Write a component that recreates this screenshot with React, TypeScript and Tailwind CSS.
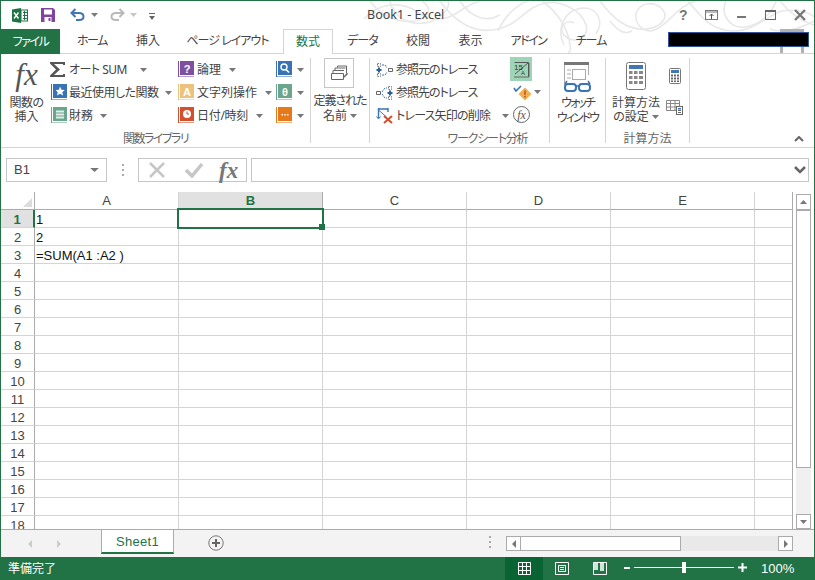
import { FC, ReactNode } from 'react';

const FONT = 'font-["Noto_Sans","Noto_Sans_CJK_JP",sans-serif] [font-feature-settings:"palt"]';
const COLS = ['A', 'B', 'C', 'D', 'E', ''];
const COL_WIDTHS = ['w-[144px]', 'w-[144px]', 'w-[144px]', 'w-[144px]', 'w-[144px]', 'w-[38px]'];
const ROWS = Array.from({ length: 18 }, (_, i) => i + 1);
const CELLS: Record<number, string> = { 1: '1', 2: '2', 3: '=SUM(A1 :A2 )' };
const TABS = [
  { label: 'ホーム', w: 'w-[64px] tracking-[-1.5px]' },
  { label: '挿入', w: 'w-[48px]' },
  { label: 'ページ レイアウト', w: 'w-[111px] tracking-[-1px]' },
  { label: '数式', w: 'w-[50px]', active: true },
  { label: 'データ', w: 'w-[59px] tracking-[-1px]' },
  { label: '校閲', w: 'w-[52px]' },
  { label: '表示', w: 'w-[53px]' },
  { label: 'アドイン', w: 'w-[63px] tracking-[-1.5px]' },
  { label: 'チーム', w: 'w-[62px] tracking-[-1px]' },
];

const Caret: FC<{ color?: string; className?: string }> = ({ color = '#777', className = '' }) => (
  <svg width="7" height="4" viewBox="0 0 7 4" className={className}>
    <path d="M0 0h7L3.5 4z" fill={color} />
  </svg>
);

const BookIcon: FC<{ color: string; glyph: ReactNode }> = ({ color, glyph }) => (
  <svg width="16" height="17" viewBox="0 0 16 17" className="shrink-0">
    <rect x="0" y="0" width="1" height="16" fill={color} />
    <rect x="2" y="0" width="14" height="14" fill={color} />
    <rect x="1" y="15" width="15" height="1" fill={color} opacity="0.55" />
    {glyph}
  </svg>
);

const glyphText = (t: string) => (
  <text x="9" y="11.5" fontSize="11" fontWeight="700" textAnchor="middle" fill="#fff" fontFamily="Liberation Sans">
    {t}
  </text>
);

const Row: FC<{ icon: ReactNode; label?: string; labelClass?: string; caret?: boolean; gap?: string; caretGap?: string }> = ({
  icon,
  label,
  labelClass = '',
  caret = true,
  gap = 'gap-[3px]',
  caretGap = 'ml-[5px]',
}) => (
  <div className={`flex h-[23px] items-center ${gap} whitespace-nowrap`}>
    {icon}
    {label && <span className={labelClass}>{label}</span>}
    {caret && <Caret className={caretGap} />}
  </div>
);

const Separator = () => <div className="my-[4px] w-px shrink-0 bg-[#d4d4d4]" />;

const Swirls = () => (
  <svg width="485" height="53" viewBox="0 0 485 53" fill="none" stroke="#e8e8e8" strokeWidth="1.6" className="pointer-events-none absolute top-0 left-[329px]">
    <path d="M34 18C48 2 70 0 86 10c16 12 30 10 44 0 8-6 14-8 20-10" />
    <path d="M40 0c10 14 26 22 44 20 14-2 20-12 8-20" />
    <path d="M60 0c4 22 34 30 52 14 6-6 8-10 6-14" />
    <path d="M110 0c14 20 34 34 58 28 24-6 26-22 48-26 12-2 34 4 40 22 4 14-14 20-22 10-6-8 2-16 10-12" />
    <path d="M130 0c10 16 26 22 40 14" />
    <path d="M168 30c6-14 18-26 30-30" />
    <path d="M212 0c14 10 26 26 28 44 2 6-2 8-2 8" />
    <path d="M234 44c-8-16 0-36 20-37 14 0 20 14 12 26" />
    <path d="M270 0c12 16 26 30 46 28 18-2 24-14 14-22-8-6-20-4-24 6-2 12 10 24 24 14 12-8 20-22 36-26" />
    <path d="M280 20c8 10 14 14 22 10" />
    <path d="M358 0c12 14 22 30 46 30 20 0 34-16 48-20 12-2 26 0 32 6" />
    <path d="M396 0c-6 14 4 28 20 26 14-2 26-14 30-26" />
    <path d="M450 0c8 10 20 20 34 24" />
    <path d="M440 28c10 4 26 2 44-8" />
  </svg>
);

const TitleBar = () => (
  <div className="relative flex h-[28px] shrink-0 items-center">
    <Swirls />
    <svg width="16" height="15" viewBox="0 0 16 15" className="absolute top-[7px] left-[11px]">
      <path d="M0 1.5 9 0v15L0 13.5z" fill="#217346" />
      <rect x="9" y="2" width="6.5" height="11" fill="#fff" stroke="#217346" />
      <path d="M11 4.5h4M11 7.5h4M11 10.5h4M12.5 3v9" stroke="#217346" />
      <path d="M2 4.5 6.5 10.5M6.5 4.5 2 10.5" stroke="#fff" strokeWidth="1.4" />
    </svg>
    <svg width="14" height="14" viewBox="0 0 14 14" className="absolute top-[7px] left-[40px]">
      <path d="M0 0h12l2 2v12H0z" fill="#80449e" />
      <rect x="3" y="1.5" width="8" height="5" fill="#fff" />
      <rect x="3.5" y="9" width="7" height="5" fill="#fff" />
      <rect x="7.5" y="10" width="2" height="3" fill="#80449e" />
    </svg>
    <svg width="15" height="14" viewBox="0 0 15 14" fill="none" className="absolute top-[7px] left-[69px]">
      <path d="M1.5 5H9c6 0 6 7 0 7H6" stroke="#4276b1" strokeWidth="2" />
      <path d="M5.5 1 1.5 5l4 4" stroke="#4276b1" strokeWidth="2" />
    </svg>
    <Caret color="#7a7a7a" className="absolute top-[12px] left-[90px]" />
    <svg width="15" height="14" viewBox="0 0 15 14" fill="none" className="absolute top-[7px] left-[109px]">
      <path d="M13.5 5H6c-6 0-6 7 0 7h3" stroke="#b9b9b9" strokeWidth="2" />
      <path d="M9.5 1l4 4-4 4" stroke="#b9b9b9" strokeWidth="2" />
    </svg>
    <Caret color="#c6c6c6" className="absolute top-[12px] left-[129px]" />
    <svg width="6" height="7" viewBox="0 0 6 7" className="absolute top-[12px] left-[148px]">
      <path d="M0 0h6v1H0zM0 3h6L3 7z" fill="#666" />
    </svg>
    <div className="absolute top-[5px] left-[366px] text-[12.5px] leading-[18px] text-[#444]">Book1 - Excel</div>
    <div className="absolute top-[4px] left-[678px] font-['Liberation_Sans',sans-serif] text-[14px] leading-[20px] font-bold text-[#777]">?</div>
    <svg width="14" height="11" viewBox="0 0 14 11" fill="none" className="absolute top-[9px] left-[704px]">
      <rect x="0.5" y="0.5" width="12" height="9" stroke="#777" />
      <path d="M1 2h11" stroke="#777" />
      <path d="M6.5 9V4M4.5 6l2-2 2 2" stroke="#555" />
    </svg>
    <div className="absolute top-[15px] left-[736px] h-[2px] w-[9px] bg-[#777]" />
    <div className="absolute top-[9px] left-[764px] h-[10px] w-[11px] border border-t-2 border-[#666]" />
    <svg width="12" height="12" viewBox="0 0 12 12" className="absolute top-[8px] left-[793px]">
      <path d="M1 1l10 10M11 1 1 11" stroke="#777" strokeWidth="2.4" />
    </svg>
  </div>
);

const TabStrip = () => (
  <div className="relative flex h-[25px] shrink-0 items-stretch border-b border-[#d4d4d4] whitespace-nowrap">
    <div className="-mb-px flex w-[59px] items-center justify-center bg-[#217346] tracking-[-1.5px] text-white">ファイル</div>
    {TABS.map((t) =>
      t.active ? (
        <div key={t.label} className={`${t.w} -mb-px flex items-center justify-center border-x border-t border-[#d4d4d4] bg-white text-[#217346]`}>
          {t.label}
        </div>
      ) : (
        <div key={t.label} className={`${t.w} flex items-center justify-center text-[#444]`}>
          {t.label}
        </div>
      ),
    )}
    <div className="absolute top-0 left-[779px] h-[24px] w-[24px] border-x-[3px] border-t-[4px] border-[#b1b1b1]" />
    <div className="absolute top-[3px] left-[667px] h-[15px] w-[141px] border border-[#2b579a] bg-black" />
  </div>
);

const InsertFunction = () => (
  <div className="flex w-[47px] shrink-0 flex-col items-center pt-[4px] pl-[2px] leading-[14px]">
    <div className="h-[33px] font-['Liberation_Serif',serif] text-[31px] leading-[33px] text-[#555] italic">fx</div>
    <div className="mt-[5px] tracking-[-0.5px] whitespace-nowrap">関数の</div>
    <div>挿入</div>
  </div>
);

const FunctionLibrary = () => (
  <div className="flex w-[309px] shrink-0 flex-col">
    <div className="flex flex-1 pl-[1px]">
      <InsertFunction />
      <div className="flex w-[129px] shrink-0 flex-col pt-[4px]">
        <Row
          icon={
            <svg width="18" height="15" viewBox="0 0 18 15" className="shrink-0">
              <path d="M1 0h15v3h-2V2H5l6 5.5L5 13h9v-1h2v3H1v-1.5L7 7.5 1 1.5z" fill="#555" />
            </svg>
          }
          label="オート SUM"
          labelClass="tracking-[-0.5px]"
          caretGap="ml-[11px]"
          gap="gap-[2px]"
        />
        <Row
          icon={
            <div className="ml-[2px]">
              <BookIcon color="#3a73b5" glyph={<path d="M9 2.5l1.5 3.2 3.3.3-2.5 2.2.8 3.3-3.1-1.8-3 1.8.7-3.3L4.700 6l3.3-.3z" fill="#fff" />} />
            </div>
          }
          label="最近使用した関数"
          labelClass="tracking-[-0.5px]"
          caretGap="ml-[4px]"
          gap="gap-[2px]"
        />
        <Row
          icon={
            <div className="ml-[2px]">
              <BookIcon color="#6ba58e" glyph={<path d="M5 3.5h8v2H5zM5 6.5h8v2H5zM5 9.5h8v2H5z" fill="#fff" opacity="0.8" />} />
            </div>
          }
          label="財務"
          gap="gap-[2px]"
        />
      </div>
      <div className="flex w-[98px] shrink-0 flex-col pt-[4px]">
        <Row icon={<BookIcon color="#7f4f9f" glyph={glyphText('?')} />} label="論理" />
        <Row icon={<BookIcon color="#edc27f" glyph={glyphText('A')} />} label="文字列操作" />
        <Row
          icon={
            <BookIcon
              color="#d2502e"
              glyph={
                <>
                  <circle cx="9" cy="7" r="4" fill="#fff" />
                  <path d="M9 4.5V7h2" stroke="#d2502e" fill="none" />
                </>
              }
            />
          }
          label="日付/時刻"
          labelClass="tracking-[-0.3px]"
        />
      </div>
      <div className="flex flex-col pt-[4px]">
        <Row
          caretGap="ml-[2px]"
          icon={
            <BookIcon
              color="#3a73b5"
              glyph={
                <>
                  <circle cx="8" cy="6" r="3" fill="none" stroke="#fff" strokeWidth="1.4" />
                  <path d="M10 8.5l3 3" stroke="#fff" strokeWidth="1.6" />
                </>
              }
            />
          }
        />
        <Row caretGap="ml-[2px]" icon={<BookIcon color="#6ba58e" glyph={glyphText('θ')} />} />
        <Row caretGap="ml-[2px]" icon={<BookIcon color="#e5791c" glyph={<path d="M5.5 7h1.5v1.5H5.5zM8.3 7h1.5v1.5H8.3zM11 7h1.5v1.5H11z" fill="#fff" />} />} />
      </div>
    </div>
    <div className="flex h-[17px] items-center justify-center tracking-[-1.5px] text-[#666]">関数ライブラリ</div>
  </div>
);

const DefinedNames = () => (
  <div className="flex w-[58px] shrink-0 flex-col items-center pt-[4px] leading-[15px]">
    <div className="mr-[2px] flex h-[30px] w-[30px] items-center justify-center border border-[#c6c6c6]">
      <svg width="18" height="16" viewBox="0 0 18 16" fill="none" stroke="#666">
        <path d="M1.5 8.5h12v6h-12zM3 8V5.5h11M5 5V3h10.5M7.5 2.5V1h9v7" />
        <path d="M14 12l3-3v-1" strokeWidth="1.5" />
      </svg>
    </div>
    <div className="mt-[5px] tracking-[-1px] whitespace-nowrap">定義された</div>
    <div className="flex items-center gap-[3px]">
      名前
      <Caret />
    </div>
  </div>
);

const Auditing = () => (
  <div className="flex w-[179px] shrink-0 flex-col">
    <div className="flex flex-1">
      <div className="flex w-[140px] shrink-0 flex-col pt-[4px] pl-[6px]">
        <Row
          caret={false}
          labelClass="tracking-[-1px]"
          icon={
            <svg width="17" height="16" viewBox="0 0 17 16" fill="none" className="shrink-0">
              <path d="M1.5 1.5h3v3h-3zM1.5 11.5h3v3h-3z" stroke="#777" strokeDasharray="1.5 1" />
              <path d="M12.5 6.5h4v3h-4z" stroke="#666" />
              <path d="M3 5.5v5M.5 8h5" stroke="#2a5f9e" strokeWidth="2" />
              <path d="M6 3h3l2 3M6 13h3l2-3" stroke="#3a73b5" strokeDasharray="2 1" />
            </svg>
          }
          label="参照元のトレース"
        />
        <Row
          caret={false}
          labelClass="tracking-[-1px]"
          icon={
            <svg width="17" height="16" viewBox="0 0 17 16" fill="none" className="shrink-0">
              <path d="M.5 6.5h4v3h-4z" stroke="#666" />
              <path d="M12.5 1.5h3v3h-3zM12.5 11.5h3v3h-3z" stroke="#777" strokeDasharray="1.5 1" />
              <path d="M14 5.5v5M11.5 8h5" stroke="#2a5f9e" strokeWidth="2" />
              <path d="M6 7l3-4h2M6 9l3 4h2" stroke="#3a73b5" strokeDasharray="2 1" />
            </svg>
          }
          label="参照先のトレース"
        />
        <Row
          caretGap="ml-[9px]"
          labelClass="tracking-[-0.8px]"
          icon={
            <svg width="17" height="17" viewBox="0 0 17 17" fill="none" className="shrink-0">
              <path d="M2.5 1v10M12 1v4M2 2h10" stroke="#3a73b5" strokeWidth="1.4" />
              <path d="M.5 9.5l2 2.5 2-2.5M2.5 3l8 7" stroke="#3a73b5" />
              <path d="M8 9l8 7M16 9l-8 7" stroke="#d2502e" strokeWidth="2" />
            </svg>
          }
          label="トレース矢印の削除"
        />
      </div>
      <div className="flex flex-col pt-[3px]">
        <div className="flex h-[24px] w-[22px] items-center justify-center bg-[#9fd5b7]">
          <svg width="17" height="17" viewBox="0 0 17 17" fill="none">
            <path d="M1 16h15V2" stroke="#666" />
            <path d="M1.5 1.5h14v14" stroke="#555" />
            <path d="M2 13 15 2" stroke="#555" />
            <text x="1" y="9" fontSize="8" fill="#333" fontFamily="Liberation Sans">15</text>
            <text x="8" y="14" fontSize="6" fill="#333" fontFamily="Liberation Sans">A</text>
          </svg>
        </div>
        <div className="flex h-[22px] items-center pl-[3px]">
          <svg width="19" height="17" viewBox="0 0 19 17" fill="none" className="shrink-0">
            <path d="M1 4l2 3 5-5" stroke="#3a73b5" strokeWidth="1.6" />
            <path d="M12 3.5l6.5 6.5-6.5 6.5-6.5-6.5z" fill="#f0b04d" />
            <path d="M12 6.5v4.5M12 12v1.5" stroke="#d2502e" strokeWidth="1.6" />
          </svg>
          <Caret className="ml-[2px]" />
        </div>
        <div className="flex h-[23px] items-center pl-[3px]">
          <div className="flex h-[17px] w-[17px] items-center justify-center rounded-full border border-[#666] font-['Liberation_Serif',serif] text-[12px] leading-none text-[#555] italic">
            fx
          </div>
        </div>
      </div>
    </div>
    <div className="flex h-[17px] items-center justify-center pl-[56px] tracking-[-1.2px] text-[#666]">ワークシート分析</div>
  </div>
);

const Watch = () => (
  <div className="flex w-[55px] shrink-0 flex-col items-center pt-[8px] leading-[15px] tracking-[-2px]">
    <svg width="30" height="31" viewBox="0 0 30 31" fill="none" className="shrink-0">
      <rect x="1" y="0" width="25" height="3" fill="#777" />
      <path d="M1.5 3v20M25.5 3v10M1 22h6" stroke="#aaa" />
      <path d="M4 8h4M4 12h4M4 16h4" stroke="#aaa" />
      <rect x="9.5" y="7.5" width="13" height="10" stroke="#aaa" />
      <rect x="2" y="22" width="11" height="7" rx="3" stroke="#3a73b5" strokeWidth="2" />
      <rect x="16" y="22" width="11" height="7" rx="3" stroke="#3a73b5" strokeWidth="2" />
      <path d="M13 24h3M2 22l2-3M27 22l-2-3" stroke="#3a73b5" strokeWidth="1.5" />
    </svg>
    <div className="mt-[2px] whitespace-nowrap">ウォッチ</div>
    <div className="whitespace-nowrap">ウィンドウ</div>
  </div>
);

const Calculation = () => (
  <div className="flex w-[83px] shrink-0 flex-col">
    <div className="flex flex-1 pl-[1px]">
      <div className="flex w-[58px] shrink-0 flex-col items-center pt-[8px] leading-[14px] whitespace-nowrap">
        <svg width="20" height="28" viewBox="0 0 20 28" fill="none" className="shrink-0">
          <rect x="0.5" y="0.5" width="19" height="27" rx="2" stroke="#777" />
          <rect x="3" y="3" width="14" height="4" fill="#4276b1" />
          <path d="M3 9h3.5v3H3zM8 9h3.5v3H8zM13 9h4v3h-4zM3 14h3.5v3H3zM8 14h3.5v3H8zM13 14h4v3h-4zM3 19h3.5v3H3zM8 19h3.5v3H8zM13 19h4v3h-4z" fill="#888" />
        </svg>
        <div className="mt-[6px]">計算方法</div>
        <div className="flex items-center gap-[3px]">
          の設定
          <Caret />
        </div>
      </div>
      <div className="flex flex-col items-center pt-[14px] pl-[1px]">
        <svg width="12" height="16" viewBox="0 0 12 16" fill="none">
          <rect x="0.5" y="0.5" width="11" height="15" rx="1" stroke="#777" />
          <rect x="2" y="2" width="8" height="3" fill="#4276b1" />
          <path d="M2 6.5h2v2H2zM5 6.5h2v2H5zM8 6.5h2v2H8zM2 9.5h2v2H2zM5 9.5h2v2H5zM8 9.5h2v2H8zM2 12.5h2v1.5H2zM5 12.5h2v1.5H5zM8 12.5h2v1.5H8z" fill="#666" />
        </svg>
        <svg width="17" height="15" viewBox="0 0 17 15" fill="none" className="mt-[16px]">
          <path d="M.5.5h13v10H.5zM.5 3.5h13M.5 7h13M4.5.5v10M9 .5v10" stroke="#888" />
          <rect x="10.5" y="6.5" width="6" height="8" fill="#fff" stroke="#666" />
          <rect x="12" y="8" width="3" height="1.5" fill="#4276b1" />
          <path d="M12 10.5h3M12 12.5h3" stroke="#666" />
        </svg>
      </div>
    </div>
    <div className="flex h-[17px] items-center justify-center text-[#666]">計算方法</div>
  </div>
);

const Ribbon = () => (
  <div className="flex h-[94px] shrink-0 border-b border-[#d4d4d4] text-[#444]">
    <FunctionLibrary />
    <Separator />
    <DefinedNames />
    <Separator />
    <Auditing />
    <Separator />
    <Watch />
    <Separator />
    <Calculation />
    <Separator />
    <div className="flex flex-1 items-end justify-end pr-[10px] pb-[5px]">
      <svg width="10" height="6" viewBox="0 0 10 6" fill="none">
        <path d="M1 5l4-4 4 4" stroke="#666" strokeWidth="2" />
      </svg>
    </div>
  </div>
);

const FormulaBar = () => (
  <div className="flex h-[44px] shrink-0 items-center px-[5px] text-[#444]">
    <div className="flex h-[24px] w-[101px] shrink-0 items-center justify-between border border-[#c6c6c6] pr-[8px] pl-[7px] font-['Liberation_Sans',sans-serif] text-[13px]">
      B1
      <Caret color="#777" className="scale-x-125" />
    </div>
    <div className="flex w-[31px] shrink-0 flex-col items-center gap-[3px]">
      <div className="h-[2px] w-[2px] bg-[#aaa]" />
      <div className="h-[2px] w-[2px] bg-[#aaa]" />
      <div className="h-[2px] w-[2px] bg-[#aaa]" />
    </div>
    <div className="flex h-[24px] w-[109px] shrink-0 items-center border border-[#c6c6c6]">
      <svg width="18" height="16" viewBox="0 0 18 16" className="ml-[9px]">
        <path d="M2 1l14 14M16 1 2 15" stroke="#c6c6c6" strokeWidth="2.5" />
      </svg>
      <svg width="20" height="16" viewBox="0 0 20 16" className="ml-[18px]" fill="none">
        <path d="M2 8l6 6L18 2" stroke="#c6c6c6" strokeWidth="3.5" />
      </svg>
      <span className="ml-[15px] font-['Liberation_Serif',serif] text-[23px] leading-none font-bold text-[#777] italic">fx</span>
    </div>
    <div className="ml-[4px] flex h-[24px] flex-1 items-center justify-end border border-[#c6c6c6] pr-[2px]">
      <svg width="12" height="8" viewBox="0 0 12 8" fill="none">
        <path d="M1 1l5 5 5-5" stroke="#666" strokeWidth="2.5" />
      </svg>
    </div>
  </div>
);

const Sheet = () => (
  <div className="flex min-h-0 flex-1">
    <div className="w-[792px] shrink-0 overflow-hidden border-r border-[#ababab] font-['Liberation_Sans',sans-serif] text-[13px] text-[#111]">
      <div className="flex h-[18px]">
        <div className="relative w-[34px] shrink-0 border-r border-b border-[#ababab]">
          <div className="absolute right-[2px] bottom-[2px] h-0 w-0 border-b-[9px] border-l-[9px] border-b-[#dcdcdc] border-l-transparent" />
        </div>
        {COLS.map((c, i) =>
          i === 1 ? (
            <div key={i} className={`${COL_WIDTHS[i]} flex shrink-0 items-center justify-center border-r border-b border-r-[#ababab] border-b-[#217346] bg-[#e1e1e1] font-bold text-[#217346]`}>
              {c}
            </div>
          ) : (
            <div key={i} className={`${COL_WIDTHS[i]} flex shrink-0 items-center justify-center border-r border-b border-r-[#d4d4d4] border-b-[#ababab] text-[#444] last:border-r-0`}>
              {c}
            </div>
          ),
        )}
      </div>
      {ROWS.map((r) => (
        <div key={r} className="flex h-[18px]">
          {r === 1 ? (
            <div className="flex w-[34px] shrink-0 items-center justify-center border-r-2 border-b border-r-[#217346] border-b-[#d4d4d4] bg-[#e1e1e1] pt-[2px] font-bold text-[#217346]">
              {r}
            </div>
          ) : (
            <div className="flex w-[34px] shrink-0 items-center justify-center border-r border-b border-r-[#ababab] border-b-[#d4d4d4] pt-[2px] text-[#444]">
              {r}
            </div>
          )}
          {COLS.map((c, i) => (
            <div key={i} className={`${COL_WIDTHS[i]} relative shrink-0 border-r border-b border-[#d4d4d4] pl-px leading-[20px] whitespace-nowrap last:border-r-0`}>
              {i === 0 && CELLS[r]}
              {i === 1 && r === 1 && (
                <div className="absolute -top-[2px] -left-[2px] z-10 h-[21px] w-[147px] border-2 border-[#217346]">
                  <div className="absolute -right-[3px] -bottom-[3px] h-[6px] w-[6px] bg-[#217346]" />
                </div>
              )}
            </div>
          ))}
        </div>
      ))}
    </div>
    <div className="flex w-[21px] shrink-0 flex-col px-[3px] pt-[2px]">
      <div className="flex h-[15px] shrink-0 items-center justify-center border border-b-0 border-[#ababab]">
        <svg width="7" height="4" viewBox="0 0 7 4">
          <path d="M0 4h7L3.5 0z" fill="#777" />
        </svg>
      </div>
      <div className="h-[259px] shrink-0 border border-t-2 border-[#ababab] bg-white" />
      <div className="flex-1 bg-[#f0f0f0]" />
      <div className="flex h-[15px] shrink-0 items-center justify-center border border-[#ababab] bg-white">
        <Caret />
      </div>
    </div>
  </div>
);

const SheetTabs = () => (
  <div className="flex h-[28px] shrink-0 border-t border-[#ababab] bg-[#f3f3f3] font-['Liberation_Sans',sans-serif]">
    <div className="flex w-[100px] shrink-0 items-center gap-[25px] pl-[27px]">
      <svg width="4" height="8" viewBox="0 0 4 8">
        <path d="M4 0v8L0 4z" fill="#ccc" />
      </svg>
      <svg width="4" height="8" viewBox="0 0 4 8">
        <path d="M0 0v8l4-4z" fill="#ccc" />
      </svg>
    </div>
    <div className="-mt-px h-[25px] w-[73px] shrink-0 border-x border-t border-b-2 border-[#ababab] border-b-[#217346] bg-white text-center text-[13px] leading-[24px] tracking-[0.3px] text-[#217346]">
      Sheet1
    </div>
    <div className="flex w-[83px] shrink-0 items-center justify-center pb-[2px]">
      <svg width="16" height="16" viewBox="0 0 16 16" fill="none">
        <circle cx="8" cy="8" r="7.2" stroke="#777" />
        <path d="M8 4v8M4 8h8" stroke="#666" strokeWidth="2" />
      </svg>
    </div>
    <div className="flex w-[249px] shrink-0 items-center justify-end pr-[15px] pb-[3px]">
      <div className="flex flex-col gap-[3px]">
        <div className="h-[2px] w-[2px] bg-[#aaa]" />
        <div className="h-[2px] w-[2px] bg-[#aaa]" />
        <div className="h-[2px] w-[2px] bg-[#aaa]" />
      </div>
    </div>
    <div className="mt-[6px] flex h-[15px] w-[287px] shrink-0 bg-[#e9e9e9]">
      <div className="flex w-[15px] items-center justify-center border border-[#ababab] bg-white">
        <svg width="4" height="8" viewBox="0 0 4 8">
          <path d="M4 0v8L0 4z" fill="#777" />
        </svg>
      </div>
      <div className="w-[160px] border-y border-r border-[#ababab] bg-white" />
      <div className="flex-1" />
      <div className="flex w-[15px] items-center justify-center border border-[#ababab] bg-white">
        <svg width="4" height="8" viewBox="0 0 4 8">
          <path d="M0 0v8l4-4z" fill="#777" />
        </svg>
      </div>
    </div>
  </div>
);

const StatusBar = () => (
  <div className="flex h-[23px] shrink-0 items-center bg-[#217346] pl-[7px] text-white">
    <div className="w-[497px] shrink-0">準備完了</div>
    <div className="flex h-full w-[38px] shrink-0 items-center justify-center bg-[#0a6332]">
      <svg width="13" height="13" viewBox="0 0 13 13" fill="none" stroke="#fff">
        <path d="M.5.5h12v12H.5zM.5 4.5h12M.5 8.5h12M4.5.5v12M8.5.5v12" />
      </svg>
    </div>
    <div className="flex h-full w-[38px] shrink-0 items-center justify-center">
      <svg width="14" height="13" viewBox="0 0 14 13" fill="none" stroke="#fff">
        <path d="M.5.5h13v12H.5zM3.5 3.5h7v6h-7zM5 5.5h4M5 7.5h4" />
      </svg>
    </div>
    <div className="flex h-full w-[38px] shrink-0 items-center justify-center">
      <svg width="14" height="13" viewBox="0 0 14 13" fill="none">
        <path d="M.5.5h13v12H.5z" stroke="#fff" />
        <path d="M1 1h4v7H1zM7 1h4v8H7z" fill="#cde6d8" />
      </svg>
    </div>
    <div className="mb-[2px] ml-[5px] h-[2px] w-[6px] shrink-0 bg-white" />
    <div className="relative mb-[2px] ml-[4px] h-px w-[100px] shrink-0 bg-white">
      <div className="absolute top-[-5px] left-[48px] h-[11px] w-[4px] bg-white" />
    </div>
    <svg width="9" height="9" viewBox="0 0 9 9" className="mb-[2px] ml-[4px] shrink-0" fill="none">
      <path d="M4.5 0v9M0 4.5h9" stroke="#fff" strokeWidth="2" />
    </svg>
    <div className="ml-[14px] font-['Liberation_Sans',sans-serif] text-[13px]">100%</div>
  </div>
);

const App = () => (
  <div className={`${FONT} flex h-[580px] w-[815px] flex-col overflow-hidden border-x border-t border-[#217346] bg-white text-[12px]`}>
    <TitleBar />
    <TabStrip />
    <Ribbon />
    <FormulaBar />
    <Sheet />
    <SheetTabs />
    <StatusBar />
  </div>
);

export default App;
